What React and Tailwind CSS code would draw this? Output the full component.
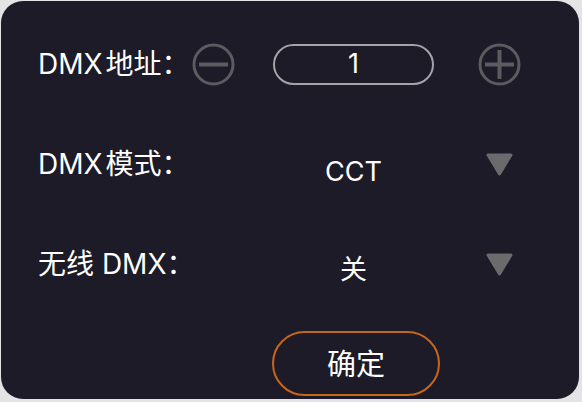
import React from 'react';

const font = { fontFamily: 'Inter, "Noto Sans CJK SC", sans-serif' };

const CircleIcon = ({ plus = false }) => (
  <svg width="43" height="43" viewBox="0 0 43 43" fill="none">
    <circle cx="21.5" cy="21.5" r="19.5" stroke="#5b5b60" strokeWidth="3" />
    <line x1="7" y1="21.5" x2="36" y2="21.5" stroke="#5b5b60" strokeWidth="4" />
    {plus && <line x1="21.5" y1="7" x2="21.5" y2="36" stroke="#5b5b60" strokeWidth="4" />}
  </svg>
);

const Caret = () => (
  <svg width="27" height="23" viewBox="0 0 27 23">
    <polygon
      points="2,2 25,2 13.5,21"
      fill="#6b6b6d"
      stroke="#6b6b6d"
      strokeWidth="3"
      strokeLinejoin="round"
    />
  </svg>
);

const Row = ({ label, left, middle, right }) => (
  <div className="flex items-center h-[50px]">
    <div className="w-[154px] shrink-0 text-[28px] text-white whitespace-nowrap">{label}</div>
    <div className="w-[43px] shrink-0 flex items-center justify-center">{left}</div>
    <div className="ml-[38px] w-[161px] shrink-0 flex items-center justify-center">{middle}</div>
    <div className="ml-[44px] w-[43px] shrink-0 flex items-center justify-center">{right}</div>
  </div>
);

export default function App() {
  return (
    <div className="w-[582px] h-[402px] bg-[#e4e4e6] p-px" style={font}>
      <div className="w-[578px] h-[398px] rounded-[22px] bg-[#1c1b27] pt-[38px] pl-[37px] flex flex-col">
        <div className="flex flex-col gap-[50px]">
          <Row
            label={<>DMX<span className="ml-[3px]">地址：</span></>}
            left={<CircleIcon />}
            middle={
              <div className="w-[161px] h-[41px] rounded-full border-2 border-[#a3a3a8] flex items-center justify-center text-[27px] text-white">
                1
              </div>
            }
            right={<CircleIcon plus />}
          />
          <Row
            label={<>DMX<span className="ml-[3px]">模式：</span></>}
            middle={<span className="text-[27px] text-white pt-[17px]">CCT</span>}
            right={<Caret />}
          />
          <Row
            label="无线 DMX："
            middle={<span className="text-[27px] text-white pt-[13px]">关</span>}
            right={<Caret />}
          />
        </div>
        <button className="mt-[42px] ml-[234px] w-[168px] h-[65px] rounded-full border-2 border-[#c9661c] text-white text-[29px] flex items-center justify-center pt-[3px]">
          确定
        </button>
      </div>
    </div>
  );
}
